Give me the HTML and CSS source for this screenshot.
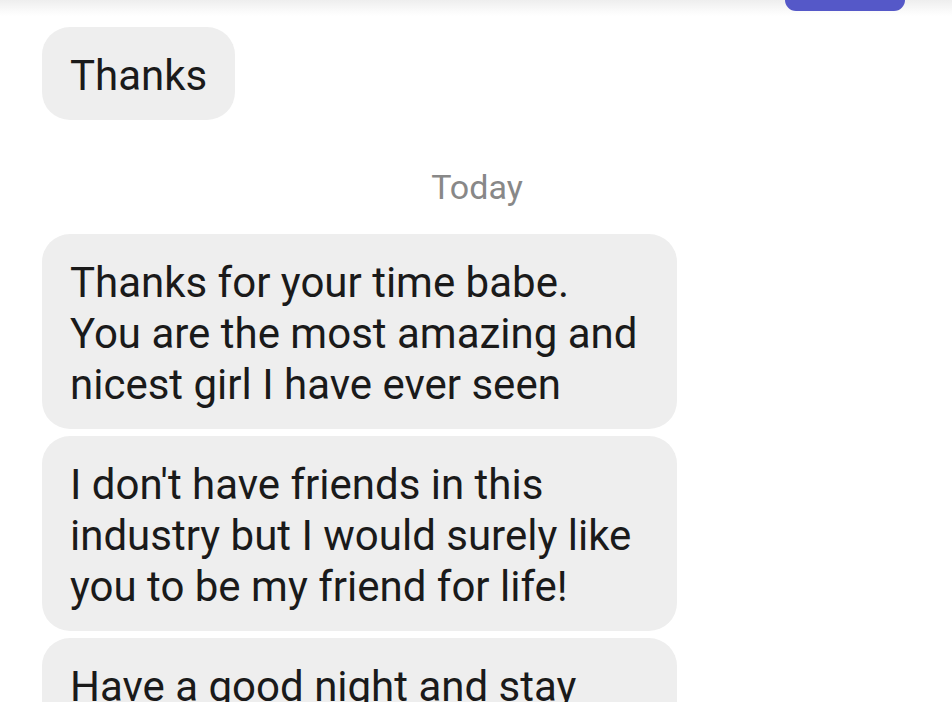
FILE: index.html
```html
<!DOCTYPE html>
<html>
<head>
  <title>Chat</title>
  <link rel="stylesheet" href="styles.css">
</head>
<body>
  <div class="thread">
    <div class="top">
      <div class="sent-tail"></div>
    </div>

    <div class="msg short">Thanks</div>

    <div class="day">Today</div>

    <div class="group">
      <div class="msg">Thanks for your time babe.<br>You are the most amazing and<br>nicest girl I have ever seen</div>
      <div class="msg">I don't have friends in this<br>industry but I would surely like<br>you to be my friend for life!</div>
      <div class="msg">Have a good night and stay<br>blessed</div>
    </div>
  </div>
</body>
</html>
```

FILE: styles.css
```css
body {
  margin: 0;
  background: #fff;
  font-family: Roboto, "Liberation Sans", sans-serif;
  color: #1a1a1a;
  overflow: hidden;
}
.thread {
  height: 702px;
  overflow: hidden;
}
.top {
  height: 27px;
  display: flex;
  justify-content: flex-end;
  padding-right: 47px;
  background: linear-gradient(#eeeeee, #fafafa 40%, #ffffff 60%);
}
.sent-tail {
  width: 120px;
  height: 11px;
  background: #5558c8;
  border-radius: 0 0 22px 22px;
}
.msg {
  background: #eeeeee;
  border-radius: 28px;
  padding: 23px 28px 19px;
  font-size: 42px;
  line-height: 51px;
  margin-left: 42px;
  width: 579px;
}
.msg.short {
  width: auto;
  display: inline-block;
}
.day {
  text-align: center;
  color: #888;
  font-size: 34px;
  line-height: 40px;
  margin: 47px 0 27px;
  padding-left: 2px;
}
.group {
  display: flex;
  flex-direction: column;
  gap: 7px;
}
```
